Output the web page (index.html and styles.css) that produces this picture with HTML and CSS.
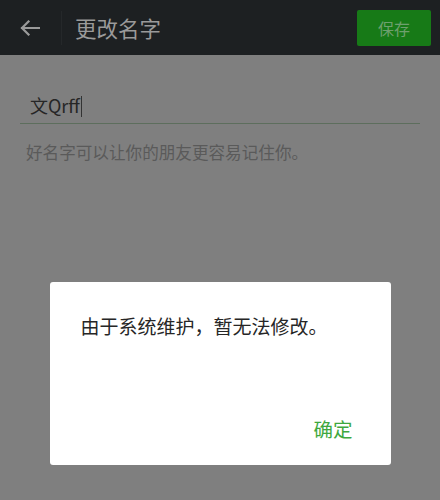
FILE: index.html
```html
<!DOCTYPE html>
<html lang="zh">
<head>
<meta charset="utf-8">
<link rel="stylesheet" href="styles.css">
</head>
<body>
<div class="page">
  <header class="appbar">
    <div class="back">
      <svg width="20" height="16" viewBox="0 0 20 16"><path d="M19 8H2M8.5 1.5L2 8l6.5 6.5" fill="none" stroke="#9a9a9a" stroke-width="2.2" stroke-linecap="square"/></svg>
    </div>
    <div class="divider"></div>
    <div class="title">更改名字</div>
    <div class="save">保存</div>
  </header>
  <main class="content">
    <div class="field"><span class="value">文Qrff</span><span class="caret"></span></div>
    <p class="hint">好名字可以让你的朋友更容易记住你。</p>
  </main>
  <div class="overlay">
    <div class="dialog">
      <p class="msg">由于系统维护，暂无法修改。</p>
      <div class="actions"><span class="ok">确定</span></div>
    </div>
  </div>
</div>
</body>
</html>
```
FILE: styles.css
```css
html, body { margin: 0; padding: 0; }
body {
  width: 440px; height: 500px; overflow: hidden;
  background: #7f7f7f;
  font-family: "Noto Sans CJK SC", "Noto Sans", sans-serif;
}
.page { position: relative; width: 440px; height: 500px; display: flex; flex-direction: column; }
.appbar {
  height: 55px; background: #1d2022;
  display: flex; align-items: center; box-sizing: border-box;
  padding: 0 9px 0 20px;
}
.back { width: 20px; height: 16px; display: flex; margin-top: 1px; }
.divider { width: 1px; height: 34px; background: #25282a; margin-left: 21px; }
.title { margin-left: 13px; color: #9a9a9a; font-size: 21.5px; line-height: 1; letter-spacing: 0; }
.save {
  margin-left: auto; width: 74px; height: 36px; border-radius: 2px;
  background: #177a17; color: #6ea06e; font-size: 16px;
  display: flex; align-items: center; justify-content: center;
}
.content { flex: 1; padding: 0 20px; }
.field {
  margin-top: 38px; height: 30px; border-bottom: 1px solid #5d6e5d;
  display: flex; align-items: center; padding-left: 10px;
}
.value { color: #262626; font-size: 18px; line-height: 1; margin-top: -6px; }
.caret { width: 1px; height: 21px; background: #333; margin-left: 1px; margin-top: -4px; }
.hint { margin: 20px 0 0 6px; color: #5a5a5a; font-size: 16.6px; line-height: 1; }
.overlay {
  position: absolute; left: 0; top: 0; right: 0; bottom: 0;
  display: flex; justify-content: center; align-items: flex-start;
}
.dialog {
  margin-top: 282px; width: 341px; height: 183px; background: #fff; border-radius: 3px;
  box-sizing: border-box; padding: 0 38px 0 31px;
  display: flex; flex-direction: column;
}
.msg { margin: 34px 0 0; color: #262626; font-size: 19px; line-height: 1; }
.actions { margin-top: auto; margin-bottom: 27px; display: flex; justify-content: flex-end; }
.ok { color: #3ea83e; font-size: 19.5px; line-height: 1; }
```
